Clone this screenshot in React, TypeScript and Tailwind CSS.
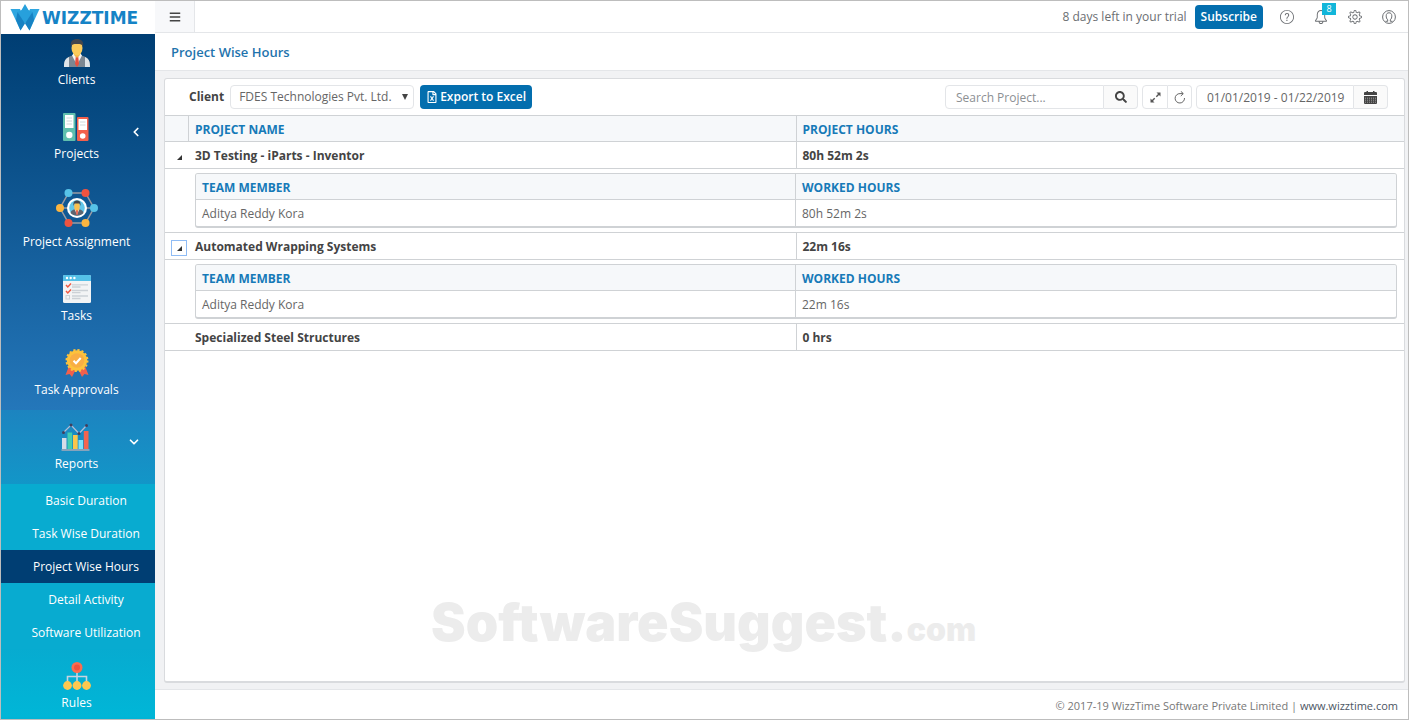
import { useState } from 'react';
import { clsx } from 'clsx';
import { FaBars, FaRegFileExcel, FaSearch } from 'react-icons/fa';
import { SlBell, SlQuestion, SlSettings } from 'react-icons/sl';
import { ChevronDown, ChevronLeft } from 'lucide-react';

interface Worker {
  name: string;
  hours: string;
}

interface Project {
  id: number;
  name: string;
  hours: string;
  members: Worker[];
}

const projects: Project[] = [
  { id: 1, name: '3D Testing - iParts - Inventor', hours: '80h 52m 2s', members: [{ name: 'Aditya Reddy Kora', hours: '80h 52m 2s' }] },
  { id: 2, name: 'Automated Wrapping Systems', hours: '22m 16s', members: [{ name: 'Aditya Reddy Kora', hours: '22m 16s' }] },
  { id: 3, name: 'Specialized Steel Structures', hours: '0 hrs', members: [] },
];

const reportLinks = ['Basic Duration', 'Task Wise Duration', 'Project Wise Hours', 'Detail Activity', 'Software Utilization'];

function LogoMark() {
  return (
    <svg width="30" height="27" viewBox="0 0 30 27" aria-hidden="true">
      <path d="M0.500 5 H10 L15 18 L10.500 26.500 Z" fill="#2fa6e0" />
      <path d="M29.500 5 H20 L15 18 L19.500 26.500 Z" fill="#2fa6e0" />
      <path d="M15 0 L18.500 6 L22.500 8 L15 19.500 L7.500 8 L11.500 6 Z" fill="#27a0dc" />
      <path d="M7.500 8 L15 19.500 L10.500 26.500 L6 16 Z" fill="#1782c3" />
      <path d="M22.500 8 L15 19.500 L19.500 26.500 L24 16 Z" fill="#1782c3" />
    </svg>
  );
}

function ClientsIcon() {
  return (
    <svg width="28" height="28" viewBox="0 0 28 28" aria-hidden="true">
      <path d="M1 28 C1 20 4 18 10 16.500 L18 16.500 C24 18 27 20 27 28 Z" fill="#7c8792" />
      <path d="M1 28 C1 22 2 20 6 18 L6 28 Z M27 28 C27 22 26 20 22 18 L22 28 Z" fill="#dfe4e8" />
      <path d="M9 16.500 L14 26 L19 16.500 L17 14 L11 14 Z" fill="#f3f4f5" />
      <path d="M12.800 17 L15.200 17 L16 25 L14 28 L12 25 Z" fill="#e8503f" />
      <path d="M11 12 L17 12 L17 16 L14 19 L11 16 Z" fill="#f2b347" />
      <ellipse cx="14" cy="9" rx="5.500" ry="7.500" fill="#fbcb5b" />
      <path d="M8 8 C7 2 10 0 14 0 C18 0 21 2 20 8 C19 5 18 5 14 5 C10 5 9 5 8 8 Z" fill="#43474e" />
    </svg>
  );
}

function ProjectsIcon() {
  return (
    <svg width="28" height="28" viewBox="0 0 28 28" aria-hidden="true">
      <rect x="0" y="0" width="12.500" height="28" rx="1" fill="#5fbfae" />
      <rect x="2" y="2" width="8.500" height="13" fill="#fff" />
      <path d="M3.500 5 H9 M3.500 8 H9 M3.500 11 H9" stroke="#cfd8dc" />
      <circle cx="6.300" cy="22" r="3.200" fill="#fff" />
      <rect x="14" y="4" width="11.500" height="24" rx="1" fill="#f2604c" />
      <rect x="15.500" y="6" width="8.500" height="11" fill="#fff" />
      <path d="M17 9 H22.500 M17 12 H22.500" stroke="#cfd8dc" />
      <circle cx="19.700" cy="23" r="2.800" fill="#fff" />
    </svg>
  );
}

function AssignmentIcon() {
  return (
    <svg width="42" height="42" viewBox="0 0 42 42" aria-hidden="true">
      <path d="M12.500 6 H29.500 L38 21 L29.500 36 H12.500 L4 21 Z M4 21 H38" fill="none" stroke="#9b9ca3" strokeWidth="1.500" />
      <circle cx="21" cy="21" r="10" fill="#fff" />
      <circle cx="21" cy="21" r="7.800" fill="#62c7ea" />
      <path d="M14.500 26 C15 23 18 22 21 22 C24 22 27 23 27.500 26 C24 29.500 18 29.500 14.500 26 Z" fill="#5d6470" />
      <path d="M18.500 22 L21 28 L23.500 22 Z" fill="#f4d6c8" />
      <path d="M20 23 H22 L21.500 28 H20.500 Z" fill="#e8503f" />
      <ellipse cx="21" cy="19.500" rx="2.800" ry="4" fill="#fbc04f" />
      <path d="M17.500 19 C17 14 19 13.500 21 13.500 C23 13.500 25 14 24.500 19 L23.500 16.500 H18.500 Z" fill="#42464e" />
      <circle cx="12.500" cy="6" r="4" fill="#57c3e8" />
      <circle cx="29.500" cy="6" r="4" fill="#ef5340" />
      <circle cx="38" cy="21" r="4" fill="#57c3e8" />
      <circle cx="29.500" cy="36" r="4" fill="#fbb540" />
      <circle cx="12.500" cy="36" r="4" fill="#ef5340" />
      <circle cx="4" cy="21" r="4" fill="#fbb540" />
    </svg>
  );
}

function TasksIcon() {
  return (
    <svg width="28" height="28" viewBox="0 0 28 28" aria-hidden="true">
      <rect width="28" height="28" rx="1.500" fill="#f3f4f5" />
      <path d="M0 6 V1.500 Q0 0 1.500 0 H26.500 Q28 0 28 1.500 V6 Z" fill="#55c1e8" />
      <circle cx="4" cy="3" r="1.200" fill="#fff" />
      <circle cx="7.700" cy="3" r="1.200" fill="#fff" />
      <circle cx="11.400" cy="3" r="1.200" fill="#fff" />
      <path d="M9 9.800 H25 M9 12 H17.500 M9 15.500 H25 M9 17.700 H17.500 M9 21 H25 M9 23.500 H17.500" stroke="#ccd1d6" strokeWidth="1.300" />
      <path d="M3 10 L4.800 12 L8 8.500 M3 16 L4.800 18 L8 14.500" fill="none" stroke="#ee5a45" strokeWidth="1.500" />
      <rect x="3" y="20.500" width="3.500" height="3.500" fill="none" stroke="#ccd1d6" />
    </svg>
  );
}

function ApprovalsIcon() {
  return (
    <svg width="28" height="28" viewBox="0 0 28 28" aria-hidden="true">
      <path d="M6 17 L2.500 26 L6.500 25 L9 28 L13 20 Z M22 17 L25.500 26 L21.500 25 L19 28 L15 20 Z" fill="#f0604d" />
      <circle cx="14" cy="11.500" r="10.200" fill="#fdc23c" />
      <circle cx="14" cy="11.500" r="10.500" fill="none" stroke="#fdc23c" strokeWidth="2" strokeDasharray="2.200 1.930" />
      <circle cx="14" cy="11.500" r="7.300" fill="#f9ae43" />
      <path d="M10.500 11.800 L13 14.200 L17.700 9" fill="none" stroke="#fff" strokeWidth="2" />
    </svg>
  );
}

function ReportsIcon() {
  return (
    <svg width="28" height="28" viewBox="0 0 28 28" className="overflow-visible" aria-hidden="true">
      <rect x="-1" y="15" width="4.500" height="11" fill="#d6dce8" />
      <rect x="4.500" y="9.500" width="4.700" height="16.500" fill="#43cdb0" />
      <rect x="10" y="12" width="4.700" height="14" fill="#fbc64b" />
      <rect x="15.500" y="17" width="4.500" height="9" fill="#7ee2fb" />
      <rect x="20.800" y="8" width="4.700" height="18" fill="#f4644f" />
      <path d="M-1.500 27 H26.500" stroke="#a3a9ba" strokeWidth="1.600" />
      <path d="M0.500 9.500 L8 2 L16 10.500 L23.500 2.500" fill="none" stroke="#b4bdd6" strokeWidth="1.200" />
      <g fill="#403f5e">
        <circle cx="0.500" cy="9.500" r="1.500" />
        <circle cx="8" cy="2" r="1.500" />
        <circle cx="16" cy="10.500" r="1.500" />
        <circle cx="23.500" cy="2.500" r="1.500" />
      </g>
    </svg>
  );
}

function RulesIcon() {
  return (
    <svg width="28" height="28" viewBox="0 0 28 28" aria-hidden="true">
      <path d="M14 9 V22 M4.500 22 V14.500 H23.500 V22" fill="none" stroke="#c8d3e0" strokeWidth="1.600" />
      <circle cx="14" cy="5.500" r="5.500" fill="#fb6c50" />
      <circle cx="14" cy="5.500" r="3" fill="#f0523e" />
      <circle cx="4.500" cy="23.500" r="4.400" fill="#fdc84f" />
      <circle cx="14" cy="23.500" r="4.400" fill="#fdc84f" />
      <circle cx="23.500" cy="23.500" r="4.400" fill="#fdc84f" />
    </svg>
  );
}

function CalendarIcon() {
  return (
    <svg width="13" height="13" viewBox="0 0 13 13" aria-hidden="true">
      <path d="M1 1 H2.500 V0 H4 V1 H9 V0 H10.500 V1 H12 Q13 1 13 2 V4 H0 V2 Q0 1 1 1 Z" fill="#444" />
      <path d="M0 5 H13 V12 Q13 13 12 13 H1 Q0 13 0 12 Z" fill="#444" />
      <path d="M1 7.200 H12 M1 9.200 H12 M1 11.200 H12" stroke="#b5b5b5" strokeWidth="0.800" strokeDasharray="1 1" />
    </svg>
  );
}

function ExpandIcon() {
  return (
    <svg width="11" height="11" viewBox="0 0 11 11" aria-hidden="true">
      <path d="M6.500 0.500 H10.500 V4.500 Z M0.500 6.500 V10.500 H4.500 Z" fill="#555" />
      <path d="M9 2 L6.300 4.700 M4.700 6.300 L2 9" stroke="#555" strokeWidth="1.400" />
    </svg>
  );
}

function ReloadIcon() {
  return (
    <svg width="12" height="13" viewBox="0 0 12 13" fill="none" stroke="#666" aria-hidden="true">
      <path d="M10.500 7 A4.700 4.700 0 1 1 6 2.600 H9" />
      <path d="M6.800 0.300 L9.300 2.600 L6.800 5" />
    </svg>
  );
}

function AccountIcon() {
  return (
    <svg width="14" height="14" viewBox="0 0 14 14" fill="none" stroke="currentColor" aria-hidden="true">
      <circle cx="7" cy="7" r="6.400" />
      <path d="M3.500 11.300 H5.700 V9.800 C4.500 8.800 4.200 7.300 4.200 5.800 C4.200 3.800 5.300 2.800 7 2.800 C8.700 2.800 9.800 3.800 9.800 5.800 C9.800 7.300 9.500 8.800 8.300 9.800 V11.300 H10.500" />
    </svg>
  );
}

interface NavItemProps {
  label: string;
  icon: React.ReactNode;
  className?: string;
  arrow?: React.ReactNode;
}

function NavItem({ label, icon, className, arrow }: NavItemProps) {
  return (
    <a href="#" className={clsx('relative flex flex-col items-center gap-[3px] pr-[3px] text-xs leading-5 text-white', className ?? 'pb-2.5 pt-[13px]')}>
      {icon}
      <span>{label}</span>
      {arrow}
    </a>
  );
}

function Sidebar() {
  return (
    <aside className="flex w-[154px] shrink-0 flex-col bg-[#00b4d6]">
      <a href="#" className="flex h-[33px] items-center gap-0.5 bg-white pl-[9px]" aria-label="WizzTime">
        <LogoMark />
        <span className="font-['DejaVu_Sans'] text-[17px] font-bold leading-8 text-[#1583c6]">WIZZTIME</span>
      </a>
      <nav>
        <div className="bg-linear-to-b from-[#003e73] to-[#2477ba]">
          <NavItem label="Clients" icon={<ClientsIcon />} className="pb-2.5 pt-[5px]" />
          <NavItem
            label="Projects"
            icon={<ProjectsIcon />}
            arrow={<ChevronLeft className="absolute right-3 top-[25px] h-3.5 w-3.5" strokeWidth={3} />}
          />
          <NavItem label="Project Assignment" icon={<AssignmentIcon />} />
          <NavItem label="Tasks" icon={<TasksIcon />} />
          <NavItem label="Task Approvals" icon={<ApprovalsIcon />} />
        </div>
        <NavItem
          label="Reports"
          icon={<ReportsIcon />}
          className="bg-linear-to-b from-[#1c84c0] to-[#1296c8] pb-2.5 pt-[13px]"
          arrow={<ChevronDown className="absolute right-3.5 top-[25px] h-3.5 w-3.5" strokeWidth={3} />}
        />
        <ul className="bg-[#08abd0]">
          {reportLinks.map((link) => (
            <li key={link}>
              <a
                href="#"
                className={clsx(
                  'block py-1.5 pl-4 text-center text-xs leading-[21px] text-white',
                  link === 'Project Wise Hours' && 'bg-[#003e73]'
                )}
              >
                {link}
              </a>
            </li>
          ))}
        </ul>
        <NavItem label="Rules" icon={<RulesIcon />} className="bg-linear-to-b from-[#07abd0] to-[#00b6d7] pb-1 pt-[13px]" />
      </nav>
    </aside>
  );
}

function TopBar() {
  return (
    <header className="flex h-8 items-center justify-between border-b border-[#e4e6e9] bg-white">
      <button type="button" aria-label="Toggle menu" className="flex h-full w-10 items-center justify-center border-r border-[#e4e6e9] bg-[#f7f8fa] text-[#444]">
        <FaBars className="h-3 w-3" />
      </button>
      <div className="flex items-center pr-3 text-[#6b6e72]">
        <span className="mr-2 text-xs">8 days left in your trial</span>
        <button type="button" className="mr-[17px] h-6 rounded-sm bg-[#036eae] px-1.5 text-xs font-semibold text-white">Subscribe</button>
        <div className="flex items-center gap-5">
          <button type="button" aria-label="Help"><SlQuestion className="h-3.5 w-3.5" /></button>
          <button type="button" aria-label="Notifications" className="relative">
            <SlBell className="h-3.5 w-3.5" />
            <span className="absolute -top-[7px] left-2 h-3 w-3.5 bg-[#12b6da] text-center text-[9px] leading-3 text-white">8</span>
          </button>
          <button type="button" aria-label="Settings"><SlSettings className="h-3.5 w-3.5" /></button>
          <button type="button" aria-label="Account"><AccountIcon /></button>
        </div>
      </div>
    </header>
  );
}

function Toolbar() {
  return (
    <div className="flex items-center justify-between border-b border-[#cfd2d5] py-1.5 pl-6 pr-4 text-xs">
      <div className="flex items-center">
        <label htmlFor="client" className="mr-1.5 font-bold text-[#444]">Client</label>
        <div className="relative mr-1.5">
          <select id="client" className="h-6 w-[184px] appearance-none rounded-sm border border-[#e3e5e8] bg-white pl-2 text-[#666]">
            <option>FDES Technologies Pvt. Ltd.</option>
          </select>
          <svg className="pointer-events-none absolute right-1.5 top-[9px] h-1.5 w-1.5" viewBox="0 0 6 6" aria-hidden="true">
            <path d="M0 0 H6 L3 6 Z" fill="#444" />
          </svg>
        </div>
        <button type="button" className="flex h-6 items-center gap-0.5 rounded-sm bg-[#036eae] px-1.5 font-semibold text-white">
          <FaRegFileExcel className="h-3 w-3" />
          Export to Excel
        </button>
      </div>
      <div className="flex items-center gap-1">
        <div className="flex">
          <input
            type="text"
            aria-label="Search Project"
            placeholder="Search Project..."
            className="h-6 w-[159px] rounded-l-sm border border-[#e3e5e8] px-2.5 placeholder:text-[#8c8f93]"
          />
          <button type="button" aria-label="Search" className="flex h-6 w-[34px] items-center justify-center rounded-r-sm border border-l-0 border-[#e3e5e8] bg-[#fafafa] text-[#444]">
            <FaSearch className="h-3 w-3" />
          </button>
        </div>
        <div className="flex">
          <button type="button" aria-label="Expand" className="flex h-6 w-[26px] items-center justify-center rounded-l-sm border border-[#e3e5e8]">
            <ExpandIcon />
          </button>
          <button type="button" aria-label="Reload" className="flex h-6 w-6 items-center justify-center rounded-r-sm border border-l-0 border-[#e3e5e8]">
            <ReloadIcon />
          </button>
        </div>
        <div className="flex">
          <input
            type="text"
            aria-label="Date range"
            defaultValue="01/01/2019 - 01/22/2019"
            className="h-6 w-[158px] rounded-l-sm border border-[#e3e5e8] pl-2.5 text-[#666]"
          />
          <button type="button" aria-label="Pick dates" className="flex h-6 w-[34px] items-center justify-center rounded-r-sm border border-l-0 border-[#e3e5e8] bg-[#fafafa]">
            <CalendarIcon />
          </button>
        </div>
      </div>
    </div>
  );
}

function MemberTable({ members }: { members: Worker[] }) {
  return (
    <div className="overflow-hidden rounded-[3px] border border-b-2 border-[#cfd2d5]">
      <table className="w-full table-fixed border-separate border-spacing-0 text-left">
        <thead>
          <tr className="h-[26px] bg-[#f6f8fa] text-[#167ab8]">
            <th className="border-b border-r border-[#cfd2d5] px-1.5 pt-0.5 font-bold">TEAM MEMBER</th>
            <th className="border-b border-[#cfd2d5] px-1.5 pt-0.5 font-bold">WORKED HOURS</th>
          </tr>
        </thead>
        <tbody>
          {members.map((member) => (
            <tr key={member.name} className="h-[26px] text-[#666]">
              <td className="border-r border-[#cfd2d5] px-1.5 pt-0.5">{member.name}</td>
              <td className="px-1.5 pt-0.5">{member.hours}</td>
            </tr>
          ))}
        </tbody>
      </table>
    </div>
  );
}

function HoursTable() {
  const [open, setOpen] = useState<number[]>([1, 2]);

  const toggle = (id: number) => {
    setOpen((prev) => (prev.includes(id) ? prev.filter((p) => p !== id) : [...prev, id]));
  };

  return (
    <table className="w-full table-fixed border-separate border-spacing-0 text-left text-xs leading-4">
      <colgroup>
        <col className="w-6" />
        <col />
        <col />
      </colgroup>
      <thead>
        <tr className="h-[26px] bg-[#f6f8fa] text-[#167ab8]">
          <th className="border-b border-r border-[#cfd2d5]" aria-label="Toggle" />
          <th className="border-b border-r border-[#cfd2d5] px-1.5 pt-0.5 font-bold">PROJECT NAME</th>
          <th className="border-b border-[#cfd2d5] px-1.5 pt-0.5 font-bold">PROJECT HOURS</th>
        </tr>
      </thead>
      {projects.map((project) => (
        <tbody key={project.id}>
          <tr className="h-[27px] font-bold text-[#444]">
            <td className="border-b border-[#cfd2d5] pl-1.5">
              {project.members.length > 0 && (
                <button
                  type="button"
                  aria-label={`Toggle ${project.name}`}
                  onClick={() => toggle(project.id)}
                  className={clsx(
                    'mt-1 flex h-4 w-4 items-center justify-center border',
                    project.id === 2 ? 'border-[#8fbcf5]' : 'border-transparent'
                  )}
                >
                  <svg width="5" height="5" viewBox="0 0 5 5" aria-hidden="true">
                    <path d="M5 0 V5 H0 Z" fill="#333" />
                  </svg>
                </button>
              )}
            </td>
            <td className="border-b border-r border-[#cfd2d5] px-1.5 pt-0.5">{project.name}</td>
            <td className="border-b border-[#cfd2d5] px-1.5 pt-0.5">{project.hours}</td>
          </tr>
          {project.members.length > 0 && open.includes(project.id) && (
            <tr>
              <td colSpan={3} className="border-b border-[#cfd2d5] pb-1 pl-[30px] pr-[7px] pt-1">
                <MemberTable members={project.members} />
              </td>
            </tr>
          )}
        </tbody>
      ))}
    </table>
  );
}

export default function App() {
  return (
    <div className="flex min-h-screen border border-[#bdbdbd] bg-white font-['Open_Sans',sans-serif] text-xs">
      <Sidebar />
      <div className="flex min-w-0 flex-1 flex-col">
        <TopBar />
        <h1 className="border-b border-[#e4e6e9] px-4 pb-2 pt-[9px] text-[13px] font-semibold leading-5 text-[#1f74ad]">Project Wise Hours</h1>
        <main className="flex flex-1 flex-col bg-[#f1f2f4] pb-1.5 pl-[9px] pr-[3px] pt-[7px]">
          <section className="relative flex-1 rounded-[3px] border border-b-2 border-[#d9dbde] bg-white">
            <Toolbar />
            <HoursTable />
            <p className="pointer-events-none absolute bottom-6 left-[266px] font-['Inter'] text-[52px] font-black text-[#ececec]">
              SoftwareSuggest.<span className="text-[32px]">com</span>
            </p>
          </section>
        </main>
        <footer className="border-t border-[#e4e6e9] px-2.5 pb-[5px] pt-2 text-right text-[11px] leading-4 text-[#777]">
          © 2017-19 WizzTime Software Private Limited | <a href="#" className="text-[#4b5563]">www.wizztime.com</a>
        </footer>
      </div>
    </div>
  );
}
